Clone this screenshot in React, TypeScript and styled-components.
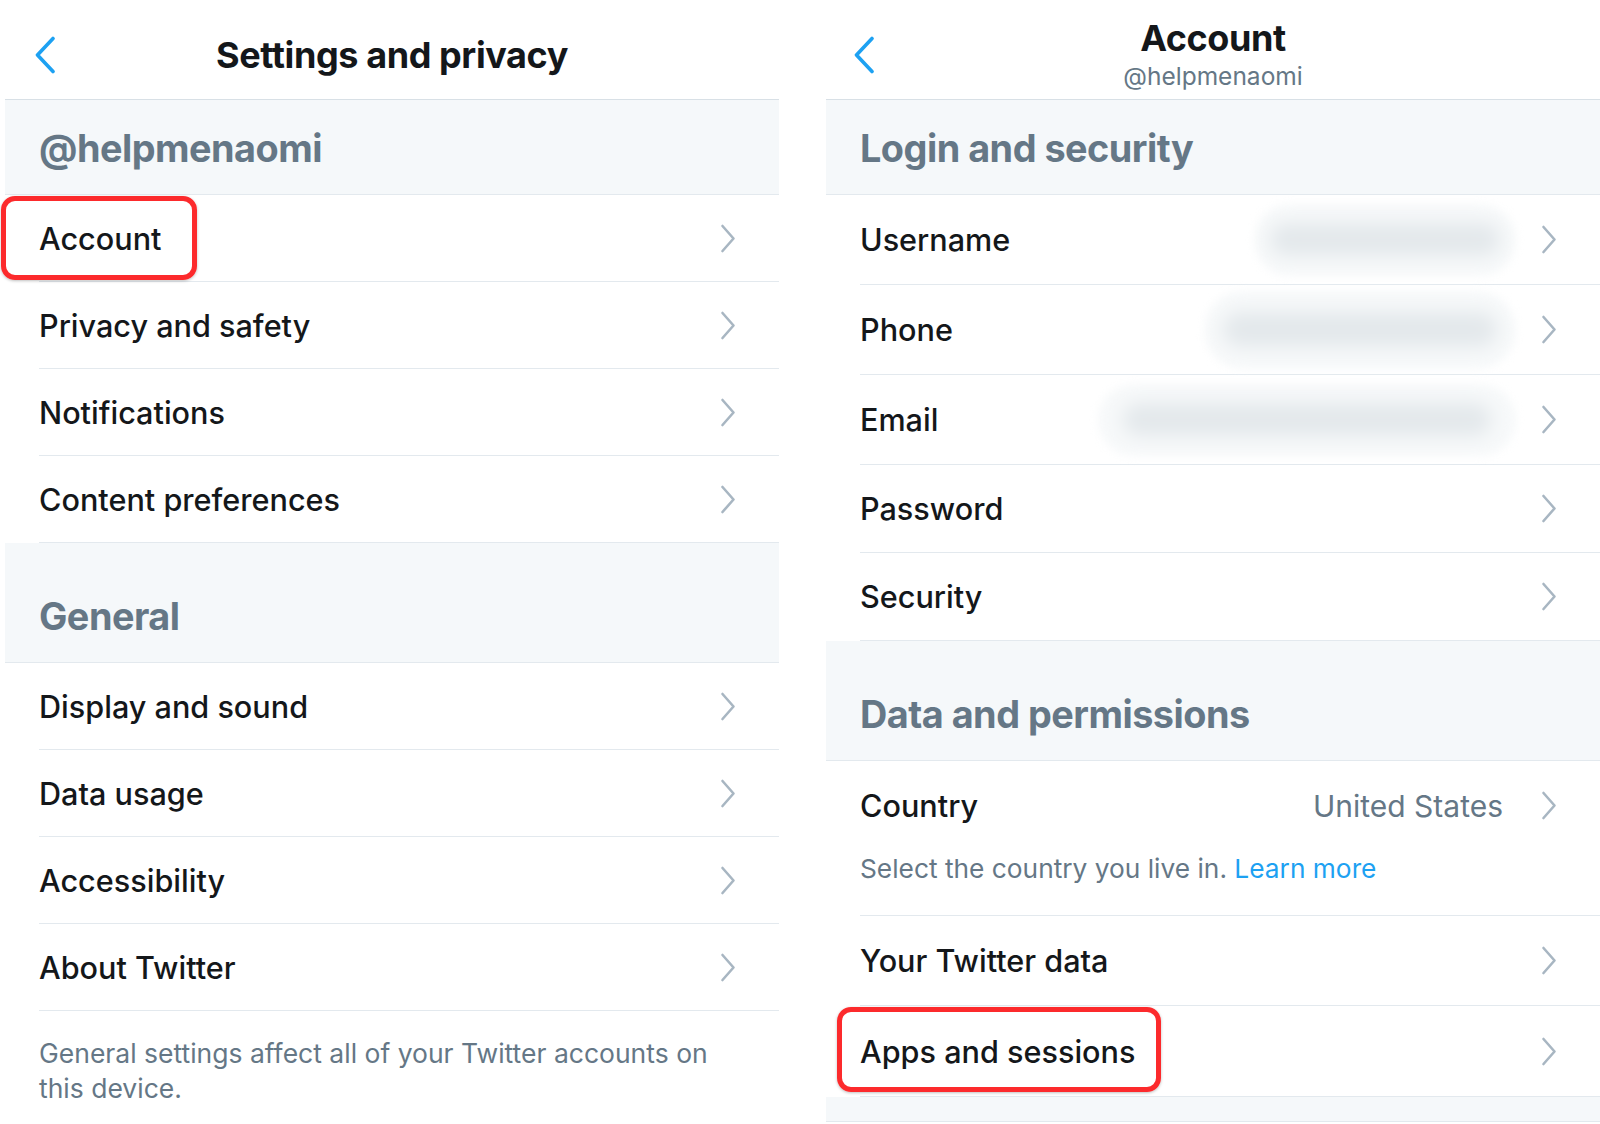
import * as React from 'react';
import styled, { createGlobalStyle } from 'styled-components';

const GlobalStyle = createGlobalStyle`
  html, body {
    margin: 0;
    padding: 0;
    background: #ffffff;
  }
  body {
    font-family: Inter, "Noto Sans", "Liberation Sans", sans-serif;
    color: #14171a;
    -webkit-font-smoothing: antialiased;
  }
`;

const Page = styled.div`
  display: flex;
  gap: 47px;
  padding-left: 5px;
  width: 1600px;
  height: 1124px;
  box-sizing: border-box;
  overflow: hidden;
`;

const Panel = styled.div`
  width: 774px;
  flex: none;
  display: flex;
  flex-direction: column;
`;

const NavBar = styled.div`
  height: 100px;
  box-sizing: border-box;
  padding-top: 10px;
  border-bottom: 1px solid #d8e0e6;
  display: grid;
  grid-template-columns: 1fr auto 1fr;
  align-items: center;
`;

const BackButton = styled.div<{ $offset: number }>`
  padding-left: ${p => p.$offset}px;
  display: flex;
  align-items: center;
`;

const TitleBlock = styled.div`
  display: flex;
  flex-direction: column;
  align-items: center;
`;

const Title = styled.div`
  font-size: 36px;
  font-weight: 700;
  letter-spacing: -0.4px;
  color: #14171a;
  line-height: 40px;
`;

const Subtitle = styled.div`
  font-size: 24.5px;
  font-weight: 400;
  color: #657786;
  line-height: 30px;
  margin-top: 3px;
`;

const Section = styled.div<{ $height: number; $bottom: number }>`
  height: ${p => p.$height}px;
  box-sizing: border-box;
  background: #f5f8fa;
  border-bottom: 1px solid #e3e9ee;
  display: flex;
  align-items: flex-end;
  padding: 0 0 ${p => p.$bottom}px 34px;
  font-size: 37.8px;
  font-weight: 700;
  letter-spacing: -0.5px;
  color: #657786;
  line-height: 44px;
`;

const Row = styled.div<{ $height: number }>`
  position: relative;
  height: ${p => p.$height}px;
  box-sizing: border-box;
  margin-left: 34px;
  padding-right: 43px;
  border-bottom: 1px solid #e3e9ee;
  display: flex;
  align-items: center;
`;

const RowLabel = styled.div`
  font-size: 30.6px;
  font-weight: 500;
  color: #14171a;
  flex: 1;
  white-space: nowrap;
`;

const RowValue = styled.div`
  font-size: 30px;
  font-weight: 400;
  color: #657786;
  margin-right: 38px;
  white-space: nowrap;
`;

const Blurred = styled.div<{ $width: number; $height: number }>`
  width: ${p => p.$width}px;
  height: ${p => p.$height}px;
  margin-right: 25px;
  border-radius: 40px;
  background: #f7f9fa;
  filter: blur(4px);
  display: flex;
  align-items: center;
  justify-content: center;
`;

const BlurCore = styled.div`
  width: 88%;
  height: 45%;
  border-radius: 20px;
  background: #e3e8eb;
  filter: blur(8px);
`;

const CountryRow = styled.div`
  margin-left: 34px;
  height: 155px;
  box-sizing: border-box;
  border-bottom: 1px solid #e3e9ee;
  display: flex;
  flex-direction: column;
`;

const CountryTop = styled.div`
  height: 89px;
  padding-right: 43px;
  display: flex;
  align-items: center;
`;

const Note = styled.div`
  font-size: 26.3px;
  line-height: 35px;
  color: #657786;
  font-weight: 400;
`;

const CountryNote = styled(Note)`
  margin-top: 1px;
`;

const Link = styled.span`
  color: #1da1f2;
`;

const Footer = styled(Note)`
  padding: 25px 60px 0 34px;
  font-size: 26.5px;
`;

const Highlight = styled.div<{ $left: number; $top: number; $width: number; $height: number }>`
  position: absolute;
  left: ${p => p.$left}px;
  top: ${p => p.$top}px;
  width: ${p => p.$width}px;
  height: ${p => p.$height}px;
  box-sizing: border-box;
  border: 5px solid #fc2a2c;
  border-radius: 14px;
  box-shadow: 0 1px 3px rgba(0, 0, 0, 0.25);
  pointer-events: none;
`;

const BottomBand = styled.div`
  height: 24px;
  background: #f5f8fa;
  border-bottom: 1px solid #e3e9ee;
`;

const Chevron = () => (
  <svg width="16" height="29" viewBox="0 0 16 29" fill="none">
    <path d="M2.5 2 L13.5 14.5 L2.5 27" stroke="#a8b6c2" strokeWidth="2.6" strokeLinecap="round" strokeLinejoin="round" />
  </svg>
);

const BackChevron = () => (
  <svg width="22" height="38" viewBox="0 0 22 38" fill="none">
    <path d="M19 2.5 L3.5 19 L19 35.5" stroke="#1da1f2" strokeWidth="3.6" strokeLinecap="round" strokeLinejoin="round" />
  </svg>
);

const leftTop = ['Account', 'Privacy and safety', 'Notifications', 'Content preferences'];
const leftGeneral = ['Display and sound', 'Data usage', 'Accessibility', 'About Twitter'];

const secure = [
  { label: 'Username', blur: { w: 262, h: 72 } },
  { label: 'Phone', blur: { w: 312, h: 78 } },
  { label: 'Email', blur: { w: 418, h: 72 } },
  { label: 'Password' },
  { label: 'Security' },
];

export default function App() {
  return (
    <>
      <GlobalStyle />
      <Page>
        <Panel>
          <NavBar>
            <BackButton $offset={29}><BackChevron /></BackButton>
            <TitleBlock>
              <Title>Settings and privacy</Title>
            </TitleBlock>
            <div />
          </NavBar>
          <Section $height={95} $bottom={24}>@helpmenaomi</Section>
          {leftTop.map((label, i) => (
            <Row key={label} $height={87}>
              <RowLabel>{label}</RowLabel>
              <Chevron />
              {i === 0 && <Highlight $left={-38} $top={1} $width={196} $height={84} />}
            </Row>
          ))}
          <Section $height={120} $bottom={24}>General</Section>
          {leftGeneral.map(label => (
            <Row key={label} $height={87}>
              <RowLabel>{label}</RowLabel>
              <Chevron />
            </Row>
          ))}
          <Footer>General settings affect all of your Twitter accounts on this device.</Footer>
        </Panel>

        <Panel>
          <NavBar>
            <BackButton $offset={27}><BackChevron /></BackButton>
            <TitleBlock>
              <Title>Account</Title>
              <Subtitle>@helpmenaomi</Subtitle>
            </TitleBlock>
            <div />
          </NavBar>
          <Section $height={95} $bottom={24}>Login and security</Section>
          {secure.map(item => (
            <Row key={item.label} $height={item.blur ? 90 : 88}>
              <RowLabel>{item.label}</RowLabel>
              {item.blur && (
                <Blurred $width={item.blur.w} $height={item.blur.h}>
                  <BlurCore />
                </Blurred>
              )}
              <Chevron />
            </Row>
          ))}
          <Section $height={120} $bottom={24}>Data and permissions</Section>
          <CountryRow>
            <CountryTop>
              <RowLabel>Country</RowLabel>
              <RowValue>United States</RowValue>
              <Chevron />
            </CountryTop>
            <CountryNote>
              Select the country you live in. <Link>Learn more</Link>
            </CountryNote>
          </CountryRow>
          <Row $height={90}>
            <RowLabel>Your Twitter data</RowLabel>
            <Chevron />
          </Row>
          <Row $height={91}>
            <RowLabel>Apps and sessions</RowLabel>
            <Chevron />
            <Highlight $left={-23} $top={1} $width={324} $height={85} />
          </Row>
          <BottomBand />
        </Panel>
      </Page>
    </>
  );
}
